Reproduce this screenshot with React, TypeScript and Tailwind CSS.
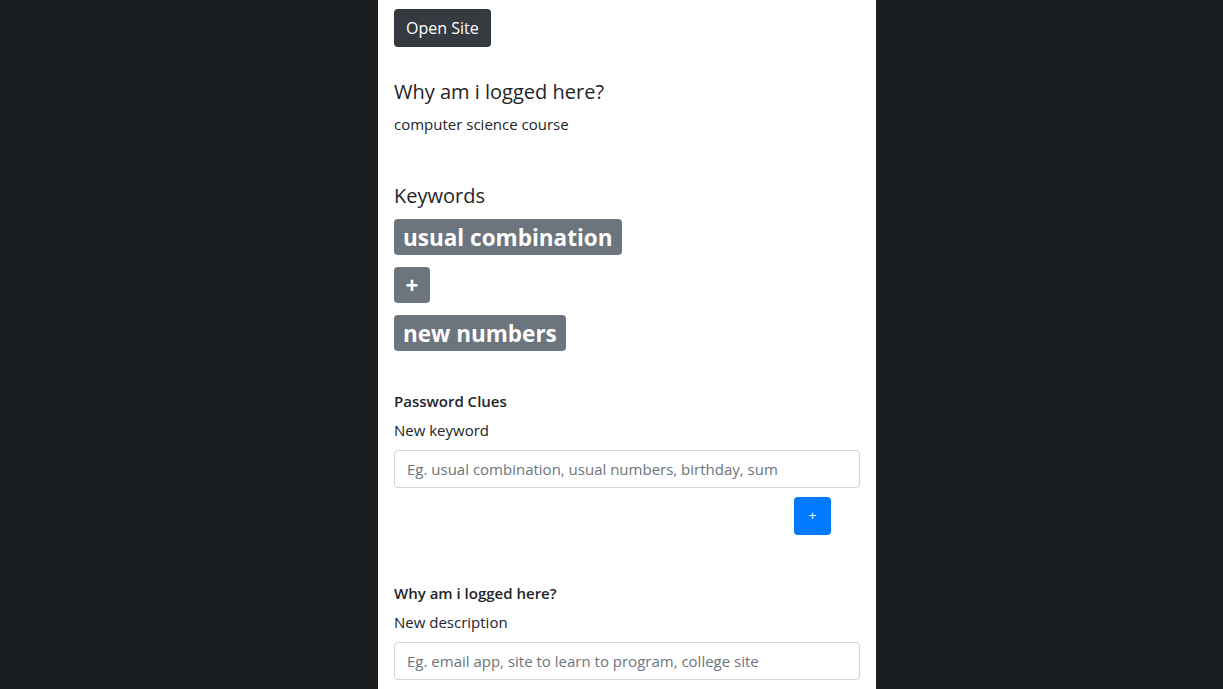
import React from "react";

export default function App() {
  return (
    <div className="min-h-screen w-full bg-[#1b1e21] flex pl-[378px]" style={{ fontFamily: '"Open Sans", "Noto Sans", sans-serif' }}>
      <div className="w-[498px] bg-white px-4 pt-[9px] text-[#212529] min-h-screen">
        <button className="h-[38px] px-3 rounded-[4px] bg-[#343a40] text-white text-[16px] leading-6">Open Site</button>

        <h5 className="mt-[33px] text-[20px] leading-6 font-medium">Why am i logged here?</h5>
        <p className="mt-2 text-[15px] leading-6">computer science course</p>

        <h5 className="mt-[48px] text-[20px] leading-6 font-medium">Keywords</h5>
        <div className="mt-[11px] flex flex-col items-start gap-3">
          <span className="h-[36px] px-[9px] pt-[2px] rounded-[4px] bg-[#6c757d] text-white text-[22.5px] font-bold leading-[34px]">usual combination</span>
          <span className="h-[36px] w-[36px] pt-[2px] text-center rounded-[4px] bg-[#6c757d] text-white text-[22.5px] font-bold leading-[34px]">+</span>
          <span className="h-[36px] px-[9px] pt-[2px] rounded-[4px] bg-[#6c757d] text-white text-[22.5px] font-bold leading-[34px]">new numbers</span>
        </div>

        <div className="mt-[38px] text-[15px] leading-6 font-semibold">Password Clues</div>
        <div className="mt-[5px] text-[15px] leading-6">New keyword</div>
        <input
          className="mt-2 w-full h-[38px] px-3 rounded-[4px] border border-[#ced4da] text-[15px] placeholder:text-[#6c757d] outline-none"
          placeholder="Eg. usual combination, usual numbers, birthday, sum"
        />
        <div className="flex justify-end pr-[29px] mt-[9px]">
          <button className="w-[37px] h-[38px] rounded-[4px] bg-[#007bff] text-white text-[13px]">+</button>
        </div>

        <div className="mt-[46px] text-[15px] leading-6 font-semibold">Why am i logged here?</div>
        <div className="mt-[5px] text-[15px] leading-6">New description</div>
        <input
          className="mt-2 w-full h-[38px] px-3 rounded-[4px] border border-[#ced4da] text-[15px] placeholder:text-[#6c757d] outline-none"
          placeholder="Eg. email app, site to learn to program, college site"
        />
      </div>
    </div>
  );
}
